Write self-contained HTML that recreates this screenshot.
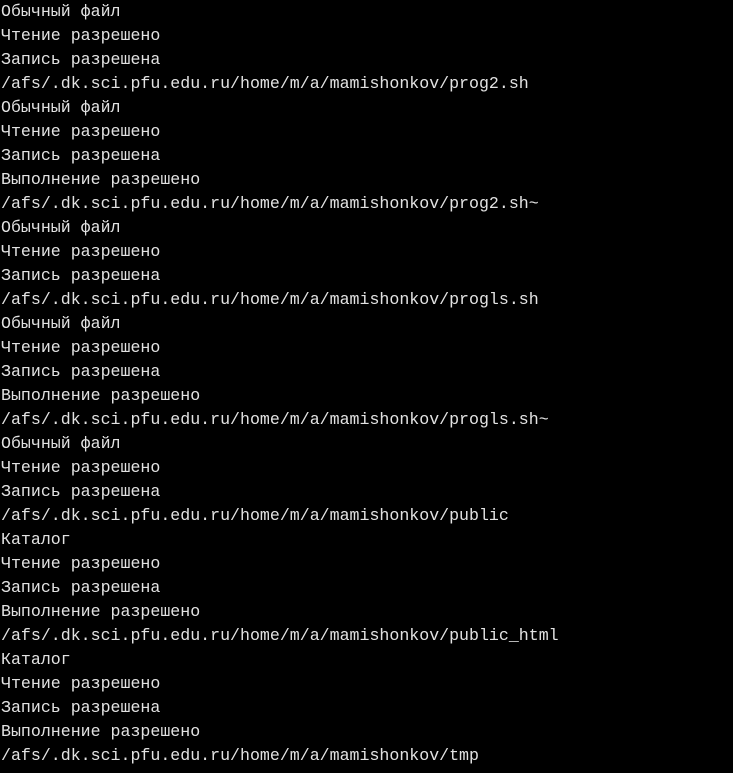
<!DOCTYPE html>
<html><head><meta charset="utf-8"><style>
html,body{margin:0;padding:0;background:#000;width:733px;height:773px;overflow:hidden}
pre{margin:0;padding:0 0 0 1px;font-family:"Liberation Mono","DejaVu Sans Mono",monospace;font-size:16.6px;line-height:24px;color:#e2e2e2;position:relative;top:0px}
</style></head><body><pre>Обычный файл
Чтение разрешено
Запись разрешена
/afs/.dk.sci.pfu.edu.ru/home/m/a/mamishonkov/prog2.sh
Обычный файл
Чтение разрешено
Запись разрешена
Выполнение разрешено
/afs/.dk.sci.pfu.edu.ru/home/m/a/mamishonkov/prog2.sh~
Обычный файл
Чтение разрешено
Запись разрешена
/afs/.dk.sci.pfu.edu.ru/home/m/a/mamishonkov/progls.sh
Обычный файл
Чтение разрешено
Запись разрешена
Выполнение разрешено
/afs/.dk.sci.pfu.edu.ru/home/m/a/mamishonkov/progls.sh~
Обычный файл
Чтение разрешено
Запись разрешена
/afs/.dk.sci.pfu.edu.ru/home/m/a/mamishonkov/public
Каталог
Чтение разрешено
Запись разрешена
Выполнение разрешено
/afs/.dk.sci.pfu.edu.ru/home/m/a/mamishonkov/public_html
Каталог
Чтение разрешено
Запись разрешена
Выполнение разрешено
/afs/.dk.sci.pfu.edu.ru/home/m/a/mamishonkov/tmp</pre></body></html>
